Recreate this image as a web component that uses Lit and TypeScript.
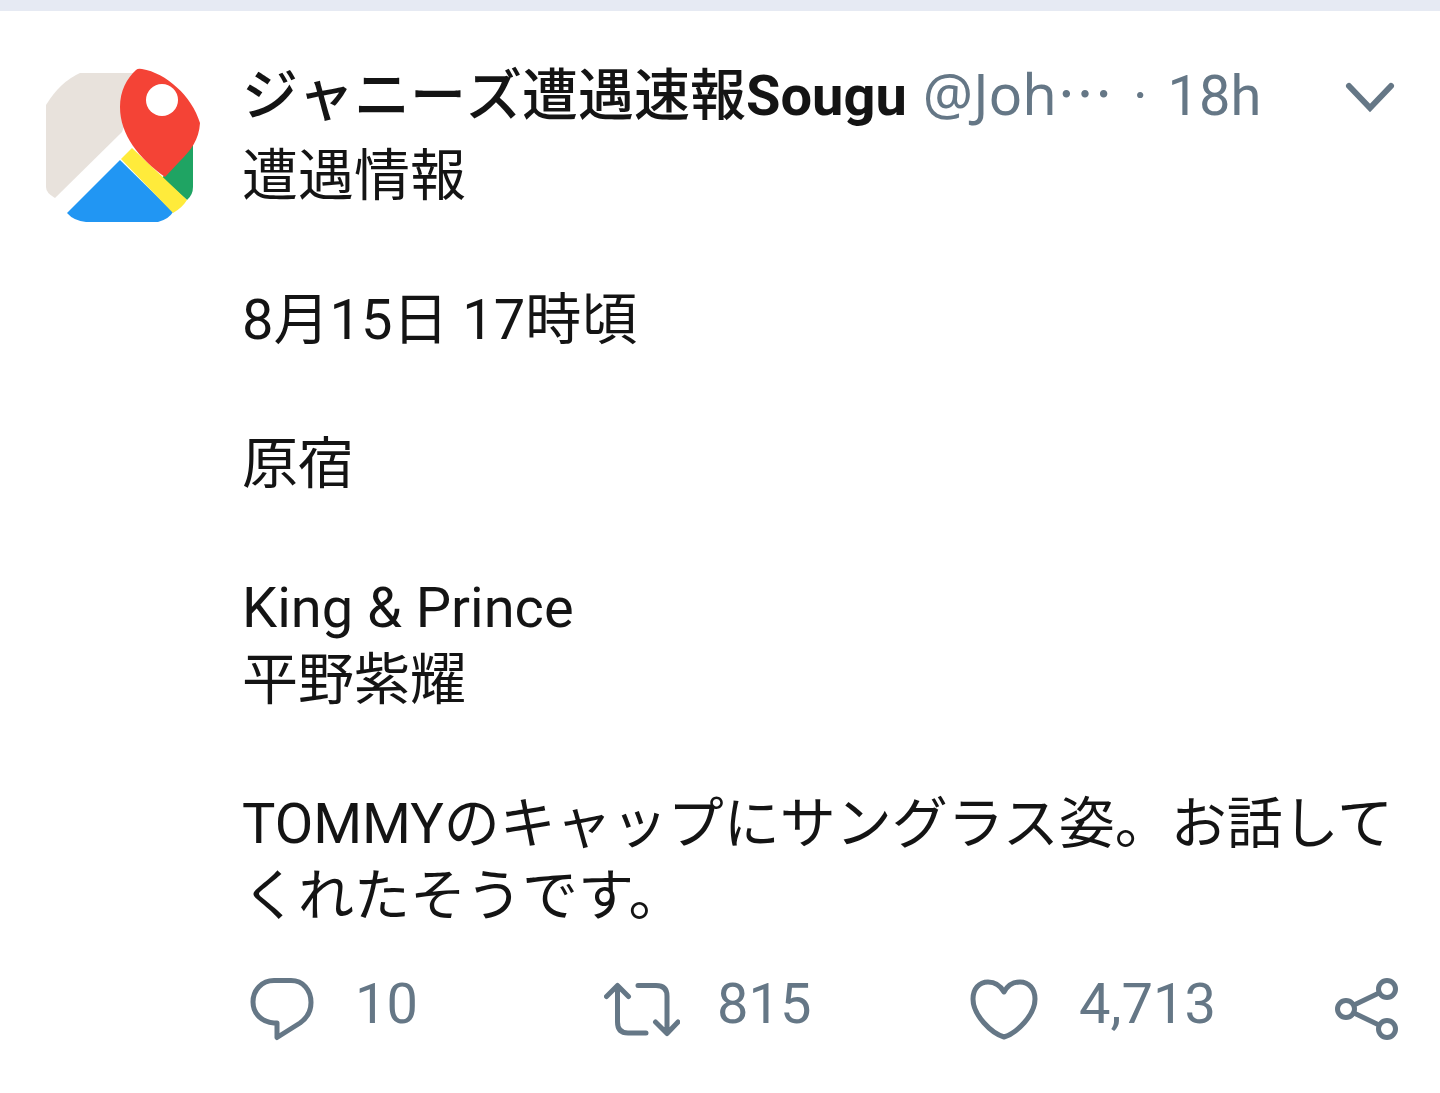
import { LitElement, html, css } from "lit";
import { customElement, property } from "lit/decorators.js";

@customElement("tweet-avatar")
class TweetAvatar extends LitElement {
  static styles = css`
    :host { display: block; }
    .pic { display: block; width: 160px; height: 168px; }
  `;
  render() {
    return html`<svg class="pic" viewBox="0 0 160 168" aria-hidden="true">
      <path d="M2 45Q16 22 36 13H100L78 72 11 138Q2 133 2 127Z" fill="#e8e2dc" />
      <path d="M76 100 129 152Q125 159 114 162H42Q30 161 23 153Z" fill="#2196f3" />
      <path d="M149 80V127Q149 135 143 140L118 118Z" fill="#1fa463" />
      <path d="M77 99 88 88 143 140Q138 148 129 153Z" fill="#ffeb3b" />
      <path d="M98 9C122 13 148 36 156 63C155 80 147 90 136 101L121 117C95 98 76 75 76 47C76 31 83 18 92 10Q94 8 98 9Z" fill="#f44336" />
      <circle cx="118" cy="40" r="16" fill="#fff" />
    </svg>`;
  }
}

@customElement("tweet-actions")
class TweetActions extends LitElement {
  @property({ type: Array }) counts: string[] = [];

  static styles = css`
    :host { display: block; }
    .bar {
      display: grid;
      grid-template-columns: repeat(3, 1fr) 72px;
    }
    .action {
      display: flex;
      align-items: flex-start;
      gap: 37px;
      height: 76px;
      padding: 0;
      border: 0;
      background: none;
      color: #657786;
      font: inherit;
      text-align: left;
      cursor: pointer;
    }
    .share { justify-content: flex-end; }
    .icon {
      flex: none;
      width: 76px;
      height: 76px;
      fill: none;
      stroke: currentColor;
      stroke-width: 5;
      stroke-linecap: round;
      stroke-linejoin: round;
    }
    .share .icon { width: 68px; }
  `;

  render() {
    return html`<div class="bar">
      <button class="action" aria-label="Reply">
        <svg class="icon" viewBox="0 0 76 76">
          <path d="M32 12.5H49C61 12.5 69 22 69 34.5C69 43 65 50 58 55L35 69.5V55H32C20 54 11 46 11 34C11 22 20 12.5 32 12.5Z" />
        </svg>
        <span>${this.counts[0]}</span>
      </button>
      <button class="action" aria-label="Retweet">
        <svg class="icon" viewBox="0 0 76 76">
          <path d="M2.5 28.5 13.5 17.5 24.5 28.5M13.5 18V54Q13.5 65 24 65H42M34 17.5H52Q63 17.5 63 28V64M51.5 54 63 65.5 74 54" />
        </svg>
        <span>${this.counts[1]}</span>
      </button>
      <button class="action" aria-label="Like">
        <svg class="icon" viewBox="0 0 76 76">
          <path d="M38 24C33 15 27 14 22 14C13 14 7 21 7 31C7 47 25 65 38 69C51 65 69 47 69 31C69 21 63 14 54 14C49 14 43 15 38 24Z" />
        </svg>
        <span>${this.counts[2]}</span>
      </button>
      <button class="action share" aria-label="Share">
        <svg class="icon" viewBox="0 0 68 76">
          <circle cx="14" cy="41" r="8.5" />
          <circle cx="55" cy="21" r="8.5" />
          <circle cx="55" cy="61" r="8.5" />
          <path d="M22 37 47 25M22 45 47 57" />
        </svg>
      </button>
    </div>`;
  }
}

@customElement("app-root")
class AppRoot extends LitElement {
  static styles = css`
    :host {
      display: block;
      min-height: 100vh;
      background: #fff;
      color: #141414;
      font: 56px/72px Roboto, "Noto Sans CJK JP", sans-serif;
    }
    .divider { height: 11px; background: #e6eaf3; }
    .tweet {
      display: flex;
      gap: 38px;
      padding: 49px 40px 48px 44px;
    }
    .avatar { flex: none; }
    .main { flex: 1; min-width: 0; }
    .head {
      display: flex;
      align-items: baseline;
      margin-bottom: 8px;
      white-space: nowrap;
      color: #657786;
    }
    .name {
      margin: 0;
      font-size: inherit;
      font-weight: 500;
      font-kerning: none;
      color: #141414;
    }
    .latin { font-weight: 700; }
    .handle {
      margin-left: 16px;
      color: inherit;
      text-decoration: none;
      line-height: 56px;
      font-family: "Noto Sans", "Noto Sans CJK JP", sans-serif;
    }
    .more { font-family: "Noto Sans CJK JP", sans-serif; }
    .dot { margin: 0 20px; }
    .menu {
      align-self: center;
      height: 72px;
      margin-left: auto;
      padding: 0;
      border: 0;
      background: none;
      color: inherit;
      cursor: pointer;
    }
    .chevron {
      display: block;
      width: 56px;
      height: 72px;
      fill: none;
      stroke: currentColor;
      stroke-width: 6;
      stroke-linecap: round;
    }
    .text { margin: 0 0 36px; white-space: pre-line; }
  `;

  private text = [
    "遭遇情報", "",
    "8月15日 17時頃", "",
    "原宿", "",
    "King & Prince",
    "平野紫耀", "",
    "TOMMYのキャップにサングラス姿。お話してくれたそうです。",
  ].join("\n");

  render() {
    return html`
      <div class="divider"></div>
      <article class="tweet" lang="ja">
        <tweet-avatar class="avatar"></tweet-avatar>
        <div class="main">
          <header class="head">
            <h1 class="name">ジャニーズ遭遇速報<span class="latin">Sougu</span></h1>
            <a class="handle" href="#">@Joh<span class="more">…</span></a>
            <span class="dot">·</span>
            <span>18h</span>
            <button class="menu" aria-label="More options">
              <svg class="chevron" viewBox="0 0 56 72">
                <path d="M5 26 26 48 47 26" />
              </svg>
            </button>
          </header>
          <p class="text">${this.text}</p>
          <tweet-actions .counts=${["10", "815", "4,713"]}></tweet-actions>
        </div>
      </article>
    `;
  }
}
